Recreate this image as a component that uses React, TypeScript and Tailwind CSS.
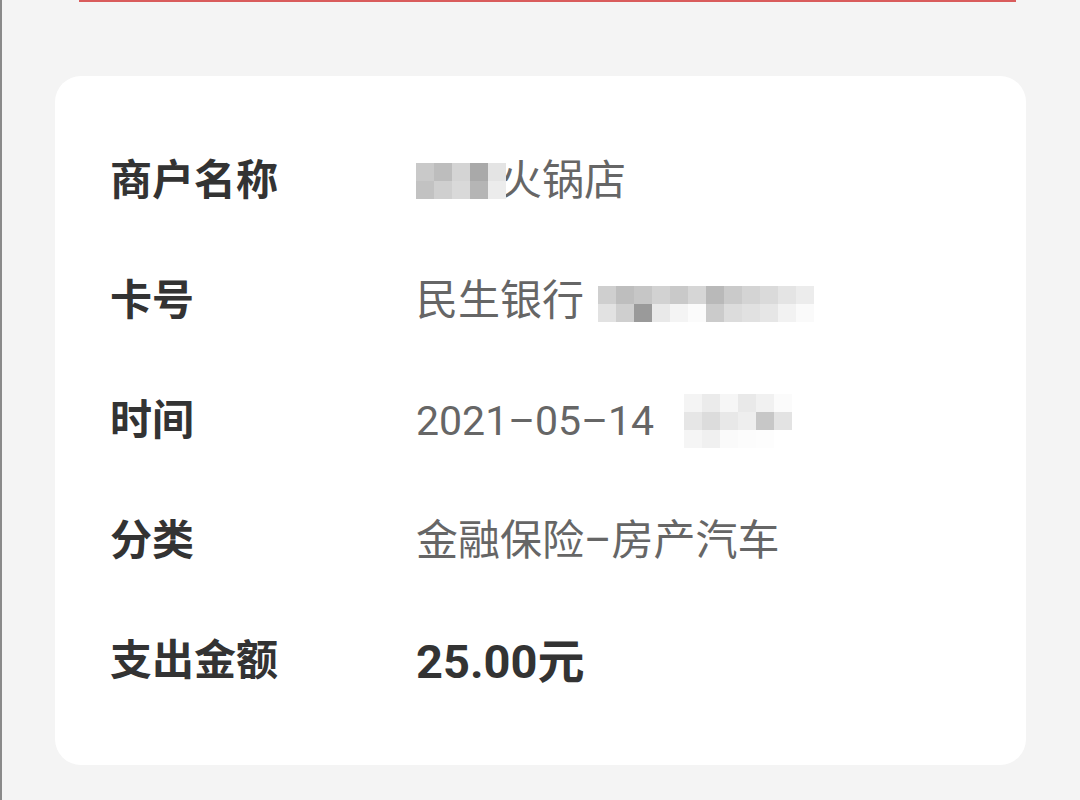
import React from "react";

const font = { fontFamily: '"Roboto", "Noto Sans CJK SC", sans-serif' };

// blurred mosaic blocks standing in for redacted text
function Mosaic({ cells, size = 17 }: { cells: string[][]; size?: number }) {
  return (
    <span className="inline-flex flex-col align-middle blur-[0.6px]">
      {cells.map((row, i) => (
        <span key={i} className="flex">
          {row.map((c, j) => (
            <span key={j} style={{ width: size, height: size, background: c }} />
          ))}
        </span>
      ))}
    </span>
  );
}

const rows = [
  { label: "商户名称", value: "name" },
  { label: "卡号", value: "card" },
  { label: "时间", value: "time" },
  { label: "分类", value: "金融保险–房产汽车" },
  { label: "支出金额", value: "25.00元" },
];

function Value({ v }: { v: string }) {
  if (v === "name")
    return (
      <span className="flex items-center">
        <span className="w-[84px] flex">
          <Mosaic
            size={18}
            cells={[
              ["#c9c9c9", "#bdbdbd", "#d4d4d4", "#a9a9a9", "#e4e4e4"],
              ["#c2c2c2", "#cfcfcf", "#d9d9d9", "#b5b5b5", "#ececec"],
            ]}
          />
        </span>
        火锅店
      </span>
    );
  if (v === "card")
    return (
      <span className="flex items-center">
        民生银行
        <span className="ml-[14px]">
          <Mosaic
            size={18}
            cells={[
              ["#cfcfcf", "#bebebe", "#c6c6c6", "#d2d2d2", "#c9c9c9", "#d6d6d6", "#b9b9b9", "#cacaca", "#d4d4d4", "#dadada", "#e4e4e4", "#ececec"],
              ["#e2e2e2", "#cfcfcf", "#9a9a9a", "#e9e9e9", "#f4f4f4", "#fbfbfb", "#cbcbcb", "#dcdcdc", "#e1e1e1", "#e6e6e6", "#f2f2f2", "#fafafa"],
            ]}
          />
        </span>
      </span>
    );
  if (v === "time")
    return (
      <span className="flex items-center text-[41px]">
        2021–05–14
        <span className="ml-[30px]">
          <Mosaic
            size={18}
            cells={[
              ["#f4f4f4", "#ebebeb", "#f6f6f6", "#e9e9e9", "#f1f1f1", "#fbfbfb"],
              ["#e6e6e6", "#dcdcdc", "#e8e8e8", "#eeeeee", "#c7c7c7", "#e3e3e3"],
              ["#f5f5f5", "#f0f0f0", "#fafafa", "#fcfcfc", "#fdfdfd", "#ffffff"],
            ]}
          />
        </span>
      </span>
    );
  if (v === "25.00元")
    return <span className="font-bold text-[#333333] text-[47px]">{v}</span>;
  return <span>{v}</span>;
}

export default function App() {
  return (
    <div
      className="w-[1080px] h-[800px] bg-[#f4f4f4] overflow-hidden border-l-2 border-[#8a8a8a]"
      style={font}
    >
      <div className="ml-[77px] w-[937px] h-[2px] bg-[#d95c5c]" />
      <div className="ml-[53px] mt-[74px] w-[971px] h-[689px] bg-white rounded-[26px] pl-[55px] pt-[45px]">
        {rows.map((r) => (
          <div key={r.label} className="flex items-center h-[120px] text-[42px] leading-none">
            <div className="w-[306px] font-bold text-[#333333]">{r.label}</div>
            <div className="text-[#666666]">
              <Value v={r.value} />
            </div>
          </div>
        ))}
      </div>
    </div>
  );
}
